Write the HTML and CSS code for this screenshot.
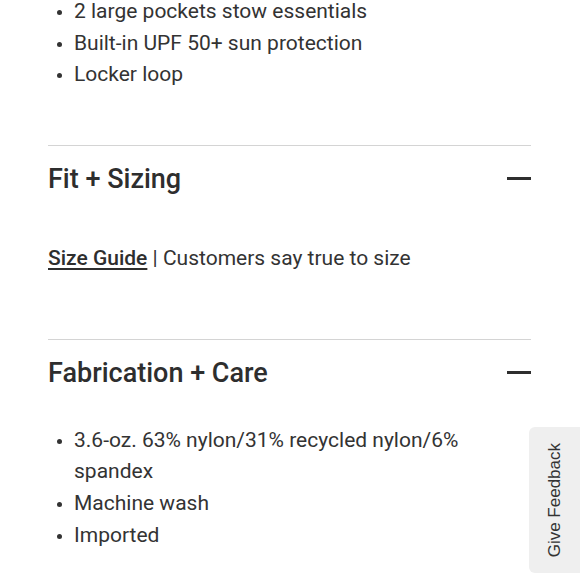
FILE: index.html
```html
<!DOCTYPE html>
<html>
<head>
<meta charset="utf-8">
<link rel="stylesheet" href="styles.css">
</head>
<body>
<div class="page">
  <ul class="list list-top">
    <li>2 large pockets stow essentials</li>
    <li>Built-in UPF 50+ sun protection</li>
    <li>Locker loop</li>
  </ul>
  <section class="acc">
    <div class="acc-head">
      <h2 class="acc-title">Fit + Sizing</h2>
      <span class="minus"></span>
    </div>
    <p class="fit-text"><a class="size-link" href="#">Size Guide</a> | Customers say true to size</p>
  </section>
  <section class="acc">
    <div class="acc-head">
      <h2 class="acc-title">Fabrication + Care</h2>
      <span class="minus"></span>
    </div>
    <ul class="list list-care">
      <li>3.6-oz. 63% nylon/31% recycled nylon/6% spandex</li>
      <li>Machine wash</li>
      <li>Imported</li>
    </ul>
  </section>
</div>
<div class="feedback"><span class="feedback-text">Give Feedback</span></div>
</body>
</html>
```
FILE: styles.css
```css
html, body {
  margin: 0;
  padding: 0;
  background: #fff;
}
body {
  font-family: Roboto, "Noto Sans", sans-serif;
  color: #333;
  overflow: hidden;
}
.page {
  padding: 0 49px 0 48px;
}
.list {
  margin: 0;
  padding: 0 0 0 26px;
  font-size: 21px;
  line-height: 31.6px;
}
.list li::marker {
  font-size: 16px;
}
.list-top {
  margin-top: -4px;
  margin-bottom: 54px;
}
.acc {
  border-top: 1px solid #d4d4d4;
}
.acc-head {
  display: flex;
  align-items: center;
  justify-content: space-between;
  padding-top: 17px;
}
.acc-title {
  margin: 0;
  font-size: 27px;
  font-weight: 500;
  line-height: 32px;
  color: #2e2e2e;
}
.minus {
  width: 24px;
  height: 3px;
  background: #2e2e2e;
}
.fit-text {
  margin: 47px 0 65px;
  font-size: 21px;
  line-height: 32px;
}
.size-link {
  color: #2e2e2e;
  font-weight: 500;
  text-decoration: underline;
  text-underline-offset: 3px;
  text-decoration-thickness: 2px;
}
.list-care {
  margin-top: 36px;
}
.feedback {
  position: fixed;
  right: 0;
  top: 427px;
  width: 51px;
  height: 146px;
  background: #efefef;
  border-radius: 6px 0 0 6px;
  display: flex;
  align-items: center;
  justify-content: center;
}
.feedback-text {
  writing-mode: vertical-rl;
  transform: rotate(180deg);
  font-family: "Liberation Sans", Arial, sans-serif;
  font-size: 17px;
  color: #333;
  white-space: nowrap;
}
```
